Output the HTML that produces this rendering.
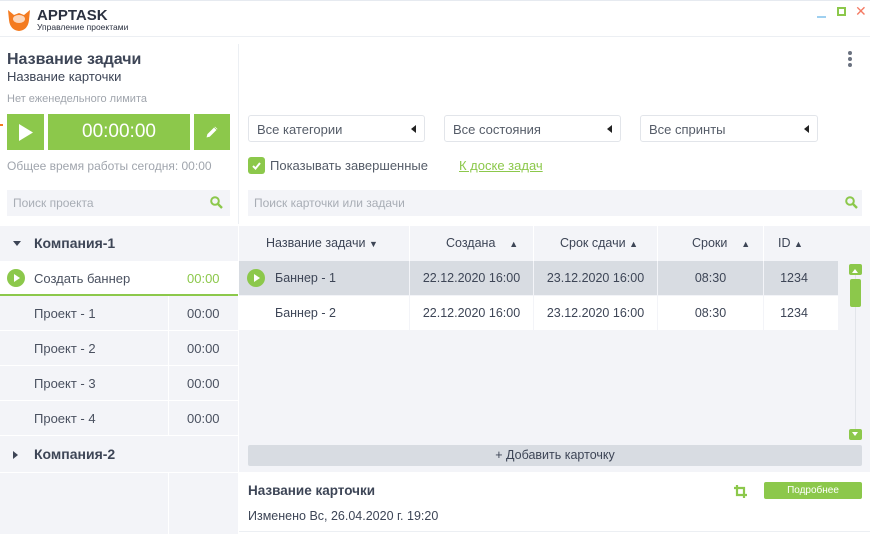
<!DOCTYPE html>
<html><head><meta charset="utf-8"><style>
*{margin:0;padding:0;box-sizing:border-box}
body{width:870px;height:534px;overflow:hidden;background:#fff;font-family:"Liberation Sans",sans-serif;color:#3d4556;position:relative;font-size:13px}
.a{position:absolute}
.g{background:#8cc84b}
.row{position:absolute;left:0;width:238px;height:35px;border-bottom:1px solid #fff}
.row span{position:absolute;top:10px;font-size:13px;color:#4a5160}
.th{position:absolute;top:236px;font-size:12.5px;color:#3d4556}
.td{position:absolute;font-size:12.5px;color:#3d4556;text-align:center}
.dd{position:absolute;top:115px;height:27px;border:1px solid #e2e5ea;border-radius:3px;background:#fff;font-size:13px;color:#555c68;padding:6px 8px}
.dd:after{content:"";position:absolute;right:8px;top:9px;border:4px solid transparent;border-right:5px solid #222;border-left:0}
</style></head><body>
<!-- header -->
<div class="a" style="left:0;top:0;width:870px;height:1px;background:#e6eaf0"></div>
<svg class="a" style="left:6px;top:6px" width="26" height="26" viewBox="0 0 26 26"><path d="M2 4 L8 9 L13 7 L18 9 L24 4 L23 14 Q22 24 13 25 Q4 24 3 14Z" fill="#f47b20"/><ellipse cx="13" cy="13" rx="6" ry="4" fill="#fff" opacity=".7"/></svg>
<div class="a" style="left:37px;top:7px;font-weight:bold;font-size:15px;color:#2b3140">APPTASK</div>
<div class="a" style="left:37px;top:22px;font-size:8.5px;color:#2b3140">Управление проектами</div>
<div class="a" style="left:817px;top:16px;width:9px;height:2px;background:#9fd0f0"></div>
<div class="a" style="left:837px;top:7px;width:9px;height:9px;border:2px solid #8cc84b"></div>
<div class="a" style="left:855px;top:3px;color:#f47a63;font-size:14px">✕</div>
<div class="a" style="left:0;top:36px;width:870px;height:1px;background:#eceff3"></div>
<div class="a" style="left:238px;top:44px;width:1px;height:180px;background:#eceff3"></div>
<div class="a" style="left:848px;top:51px;width:4px;height:4px;border-radius:2px;background:#6b7280;box-shadow:0 6px 0 #6b7280,0 12px 0 #6b7280"></div>
<!-- left top -->
<div class="a" style="left:7px;top:51px;font-size:16px;font-weight:bold;color:#3d4556">Название задачи</div>
<div class="a" style="left:7px;top:69px;font-size:13px;color:#3d4556">Название карточки</div>
<div class="a" style="left:7px;top:93px;font-size:11px;color:#a0a5ad">Нет еженедельного лимита</div>
<div class="a g" style="left:7px;top:114px;width:37px;height:36px"></div>
<svg class="a" style="left:18px;top:124px" width="16" height="17"><path d="M1 0 L15 8.5 L1 17Z" fill="#fff"/></svg>
<div class="a g" style="left:48px;top:114px;width:142px;height:36px;color:#fff;font-size:19px;text-align:center;line-height:36px">00:00:00</div>
<div class="a g" style="left:194px;top:114px;width:36px;height:36px"></div>
<svg class="a" style="left:204px;top:124px" width="16" height="16"><path d="M2 14 L3 10 L11 2 L14 5 L6 13Z M10 3 L13 6" fill="#fff" stroke="#8cc84b" stroke-width=".8"/></svg>
<div class="a" style="left:0;top:124px;width:3px;height:2px;background:#f47b20"></div>
<div class="a" style="left:7px;top:159px;font-size:12px;color:#a0a5ad">Общее время работы сегодня: 00:00</div>
<div class="a" style="left:7px;top:190px;width:223px;height:26px;background:#f3f4f8;font-size:12px;color:#a8adb5;padding:6px 6px">Поиск проекта</div>
<svg class="a" style="left:210px;top:196px" width="13" height="13"><circle cx="5" cy="5" r="3.8" fill="none" stroke="#8cc84b" stroke-width="2"/><path d="M8 8 L12 12" stroke="#8cc84b" stroke-width="2.4"/></svg>
<!-- left list -->
<div class="a" style="left:0;top:226px;width:238px;height:308px;background:#f3f4f8"></div>
<div class="a" style="left:168px;top:296px;width:1px;height:140px;background:#fff"></div>
<div class="a" style="left:168px;top:473px;width:1px;height:61px;background:#fff"></div>
<div class="a" style="left:13px;top:241px;border:4px solid transparent;border-top:5px solid #3d4556"></div>
<div class="a" style="left:34px;top:235px;font-size:14px;font-weight:bold;color:#3d4556">Компания-1</div>
<div class="row" style="top:261px;background:#fff;border-bottom:2px solid #8cc84b"><svg class="a" style="left:7px;top:8px" width="18" height="18"><circle cx="9" cy="9" r="9" fill="#8cc84b"/><path d="M7 5 L13 9 L7 13Z" fill="#fff"/></svg><span style="left:34px">Создать баннер</span><span style="left:187px;color:#8cc84b">00:00</span></div>
<div class="row" style="top:296px"><span style="left:34px">Проект - 1</span><span style="left:187px">00:00</span></div>
<div class="row" style="top:331px"><span style="left:34px">Проект - 2</span><span style="left:187px">00:00</span></div>
<div class="row" style="top:366px"><span style="left:34px">Проект - 3</span><span style="left:187px">00:00</span></div>
<div class="row" style="top:401px"><span style="left:34px">Проект - 4</span><span style="left:187px">00:00</span></div>
<div class="a" style="left:13px;top:451px;border:4px solid transparent;border-left:5px solid #3d4556"></div>
<div class="a" style="left:34px;top:446px;font-size:14px;font-weight:bold;color:#3d4556">Компания-2</div>
<div class="a" style="left:0;top:472px;width:238px;height:1px;background:#fff"></div>
<!-- right filters -->
<div class="dd" style="left:248px;width:177px">Все категории</div>
<div class="dd" style="left:444px;width:177px">Все состояния</div>
<div class="dd" style="left:640px;width:178px">Все спринты</div>
<div class="a g" style="left:248px;top:157px;width:17px;height:17px;border-radius:3px"></div>
<svg class="a" style="left:251px;top:160px" width="11" height="11"><path d="M2 6 L4.5 8.5 L9 3" fill="none" stroke="#fff" stroke-width="2"/></svg>
<div class="a" style="left:270px;top:158px;font-size:13px;color:#555c68">Показывать завершенные</div>
<div class="a" style="left:459px;top:158px;font-size:13px;color:#8cc84b;text-decoration:underline">К доске задач</div>
<div class="a" style="left:248px;top:190px;width:614px;height:26px;background:#f3f4f8;font-size:12px;color:#a8adb5;padding:6px 6px">Поиск карточки или задачи</div>
<svg class="a" style="left:845px;top:196px" width="13" height="13"><circle cx="5" cy="5" r="3.8" fill="none" stroke="#8cc84b" stroke-width="2"/><path d="M8 8 L12 12" stroke="#8cc84b" stroke-width="2.4"/></svg>
<!-- table -->
<div class="a" style="left:239px;top:226px;width:631px;height:246px;background:#f3f4f8"></div>
<div class="a" style="left:409px;top:226px;width:1px;height:105px;background:#fff"></div>
<div class="a" style="left:533px;top:226px;width:1px;height:105px;background:#fff"></div>
<div class="a" style="left:657px;top:226px;width:1px;height:105px;background:#fff"></div>
<div class="a" style="left:763px;top:226px;width:1px;height:105px;background:#fff"></div>
<div class="th" style="left:266px">Название задачи <span style="font-size:9px">▼</span></div>
<div class="th" style="left:446px">Создана &nbsp;&nbsp;&nbsp;<span style="font-size:9px">▲</span></div>
<div class="th" style="left:560px">Срок сдачи <span style="font-size:9px">▲</span></div>
<div class="th" style="left:692px">Сроки &nbsp;&nbsp;&nbsp;<span style="font-size:9px">▲</span></div>
<div class="th" style="left:778px">ID <span style="font-size:9px">▲</span></div>
<div class="a" style="left:239px;top:261px;width:599px;height:34px;background:#d8dce2"></div>
<div class="a" style="left:239px;top:296px;width:599px;height:34px;background:#fff"></div>
<div class="a" style="left:409px;top:261px;width:1px;height:70px;background:#f3f4f8"></div>
<div class="a" style="left:533px;top:261px;width:1px;height:70px;background:#f3f4f8"></div>
<div class="a" style="left:657px;top:261px;width:1px;height:70px;background:#f3f4f8"></div>
<div class="a" style="left:763px;top:261px;width:1px;height:70px;background:#f3f4f8"></div>
<svg class="a" style="left:247px;top:269px" width="18" height="18"><circle cx="9" cy="9" r="9" fill="#8cc84b"/><path d="M7 5 L13 9 L7 13Z" fill="#fff"/></svg>
<div class="td" style="left:275px;top:271px">Баннер - 1</div>
<div class="td" style="left:410px;top:271px;width:123px">22.12.2020 16:00</div>
<div class="td" style="left:534px;top:271px;width:123px">23.12.2020 16:00</div>
<div class="td" style="left:658px;top:271px;width:105px">08:30</div>
<div class="td" style="left:764px;top:271px;width:60px">1234</div>
<div class="td" style="left:275px;top:306px">Баннер - 2</div>
<div class="td" style="left:410px;top:306px;width:123px">22.12.2020 16:00</div>
<div class="td" style="left:534px;top:306px;width:123px">23.12.2020 16:00</div>
<div class="td" style="left:658px;top:306px;width:105px">08:30</div>
<div class="td" style="left:764px;top:306px;width:60px">1234</div>
<div class="a" style="left:855px;top:264px;width:1px;height:176px;background:#e2e5ea"></div>
<div class="a g" style="left:849px;top:264px;width:13px;height:11px;border-radius:2px"></div>
<div class="a" style="left:852px;top:266px;border:3.5px solid transparent;border-bottom:4px solid #fff"></div>
<div class="a g" style="left:850px;top:279px;width:11px;height:28px;border-radius:2px"></div>
<div class="a g" style="left:849px;top:429px;width:13px;height:11px;border-radius:2px"></div>
<div class="a" style="left:852px;top:432px;border:3.5px solid transparent;border-top:4px solid #fff"></div>
<div class="a" style="left:248px;top:445px;width:614px;height:21px;background:#d8dce2;border-radius:2px;text-align:center;font-size:12.5px;line-height:21px;color:#3d4556">+ Добавить карточку</div>
<!-- bottom -->
<div class="a" style="left:248px;top:483px;font-size:13.5px;font-weight:bold;color:#3d4556">Название карточки</div>
<div class="a" style="left:248px;top:509px;font-size:12.5px;color:#3d4556">Изменено Вс, 26.04.2020 г. 19:20</div>
<svg class="a" style="left:734px;top:485px" width="13" height="13"><path d="M3 0 V10 H13 M0 3 H10 V13" fill="none" stroke="#8cc84b" stroke-width="2.2"/></svg>
<div class="a g" style="left:764px;top:482px;width:98px;height:17px;border-radius:2px;color:#fff;font-size:10px;text-align:center;line-height:17px">Подробнее</div>
<div class="a" style="left:239px;top:531px;width:631px;height:1px;background:#eceff3"></div>
</body></html>
